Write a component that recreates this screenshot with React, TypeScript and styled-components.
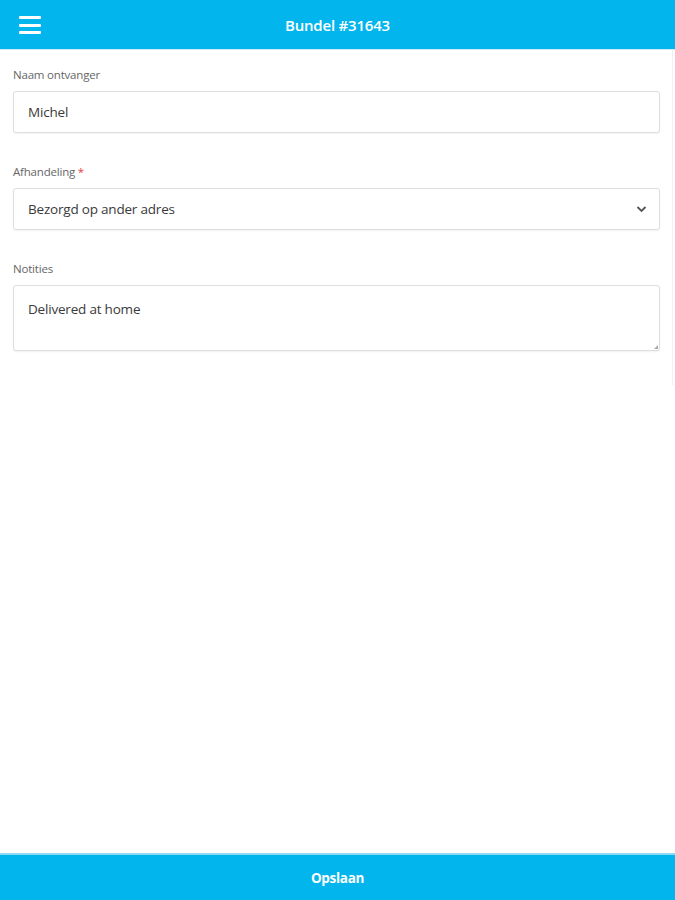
import { createGlobalStyle, styled } from "styled-components";

const GlobalStyle = createGlobalStyle`
    html, body {
        margin: 0;
        padding: 0;
        background: #ffffff;
        font-family: "Open Sans", "Noto Sans", Arial, sans-serif;
    }
    * {
        box-sizing: border-box;
    }
`;

const Page = styled.div`
    height: 900px;
    display: flex;
    flex-direction: column;
`;

const Header = styled.header`
    height: 50px;
    flex-shrink: 0;
    background-color: #02b5ec;
    display: flex;
    align-items: center;
    justify-content: center;
    position: relative;
    border-bottom: 1px solid #cfeaf6;
`;

const MenuButton = styled.button`
    position: absolute;
    left: 19px;
    top: 16px;
    width: 22px;
    height: 18px;
    padding: 0;
    border: none;
    background: none;
    display: flex;
    flex-direction: column;
    justify-content: space-between;
    span {
        display: block;
        height: 3px;
        background: #ffffff;
        border-radius: 1px;
    }
`;

const Title = styled.h1`
    margin: 0;
    font-size: 15px;
    font-weight: 600;
    color: #ffffff;
    letter-spacing: -0.2px;
`;

const Main = styled.main`
    flex: 1;
    display: flex;
`;

const Form = styled.form`
    flex: 1;
    height: 335px;
    padding: 16px 12px 0 13px;
    border-right: 1px solid #f0f0f0;
    margin-right: 2px;
`;

const Field = styled.div`
    margin-bottom: 30px;
`;

const Label = styled.label`
    display: block;
    font-size: 11.5px;
    color: #666;
    height: 17px;
    line-height: 17px;
    margin-bottom: 8px;
    letter-spacing: -0.2px;
`;

const Required = styled.span`
    color: #e0443e;
`;

const boxStyle = `
    width: 100%;
    border: 1px solid #dedede;
    border-radius: 3px;
    background: #ffffff;
    box-shadow: 0 1px 2px rgba(0, 0, 0, 0.06);
    font-family: "Open Sans", "Noto Sans", Arial, sans-serif;
    font-size: 13.5px;
    color: #3a3a3a;
    padding: 0 14px;
    letter-spacing: -0.2px;
`;

const Input = styled.div`
    ${boxStyle}
    height: 42px;
    display: flex;
    align-items: center;
`;

const Select = styled.div`
    ${boxStyle}
    height: 42px;
    display: flex;
    align-items: center;
    justify-content: space-between;
    padding-right: 12px;
`;

const TextArea = styled.div`
    ${boxStyle}
    height: 66px;
    padding-top: 14px;
    position: relative;
`;

const Grip = styled.span`
    position: absolute;
    right: 1px;
    bottom: 1px;
    width: 0;
    height: 0;
    border-left: 4px solid transparent;
    border-bottom: 4px solid #aaa;
`;

const Footer = styled.button`
    height: 47px;
    flex-shrink: 0;
    border: none;
    background-color: #02b5ec;
    color: #ffffff;
    font-family: "Open Sans", "Noto Sans", Arial, sans-serif;
    font-size: 13.5px;
    font-weight: 700;
    letter-spacing: -0.3px;
    border-top: 2px solid #8fd9f3;
`;

function Chevron() {
    return (
        <svg width="11" height="8" viewBox="0 0 11 8">
            <path d="M1.5 2 L5.5 6 L9.5 2" fill="none" stroke="#555" strokeWidth="1.8" />
        </svg>
    );
}

function App() {
    return (
        <Page>
            <GlobalStyle />
            <Header>
                <MenuButton type="button">
                    <span />
                    <span />
                    <span />
                </MenuButton>
                <Title>Bundel #31643</Title>
            </Header>
            <Main>
                <Form>
                    <Field>
                        <Label>Naam ontvanger</Label>
                        <Input>Michel</Input>
                    </Field>
                    <Field>
                        <Label>
                            Afhandeling <Required>*</Required>
                        </Label>
                        <Select>
                            Bezorgd op ander adres
                            <Chevron />
                        </Select>
                    </Field>
                    <Field>
                        <Label>Notities</Label>
                        <TextArea>
                            Delivered at home
                            <Grip />
                        </TextArea>
                    </Field>
                </Form>
            </Main>
            <Footer type="button">Opslaan</Footer>
        </Page>
    );
}

export default App;
